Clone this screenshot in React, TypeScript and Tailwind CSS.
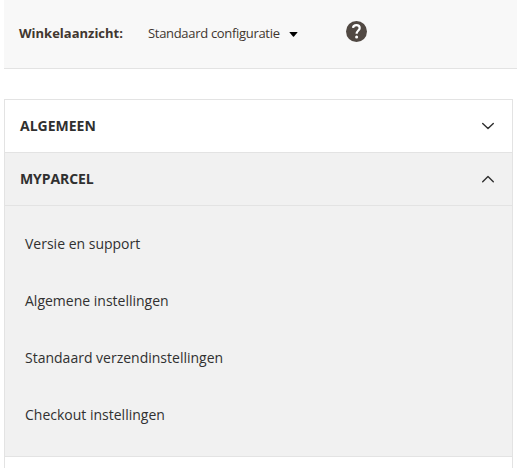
const items = ['Versie en support', 'Algemene instellingen', 'Standaard verzendinstellingen', 'Checkout instellingen'];

function Chevron({ up = false }: { up?: boolean }) {
  return (
    <svg width="14" height="8" viewBox="0 0 14 8" fill="none" stroke="#303030" strokeWidth="1.4" strokeLinecap="round" strokeLinejoin="round">
      <path d={up ? 'M1.7 6.8 L7 1.6 L12.3 6.8' : 'M1.7 1.4 L7 6.6 L12.3 1.4'} />
    </svg>
  );
}

export default function App() {
  return (
    <div className="h-[468px] w-[517px] overflow-hidden bg-white pl-1 font-['Open_Sans',sans-serif] text-[14px] text-[#303030]">
      <header className="flex h-[69px] items-start border-b border-[#e3e3e3] bg-[#f8f8f8] pl-[15px] text-[13px] text-[#41362f]">
        <span className="mt-[23px] w-[129px] leading-5 font-bold">Winkelaanzicht:</span>
        <span className="mt-[23px] w-[142px] leading-5 tracking-[-0.31px] whitespace-nowrap text-[#41362f]">Standaard configuratie</span>
        <svg className="mt-[32px] -ml-px" width="9" height="6" viewBox="0 0 9 6">
          <path d="M1 0h7q.8 0 .4.6L5 4.5q-.5.5-1 0L.6.6Q.2 0 1 0z" fill="#000" />
        </svg>
        <svg className="mt-[21px] ml-[48px]" width="21" height="21" viewBox="0 0 21 21">
          <circle cx="10.5" cy="10.5" r="10.5" fill="#514943" />
          <path d="M7 6.8C7.2 5 8.6 4.1 10.4 4.1c2 0 3.3 1.1 3.3 2.8 0 2.5-3.1 2.7-3.1 5.9" fill="none" stroke="#fff" strokeWidth="2.2" />
          <circle cx="10.6" cy="16.1" r="1.5" fill="#fff" />
        </svg>
      </header>
      <main className="mt-[30px] w-[509px] border border-[#e3e3e3]">
        <div className="flex h-[53px] items-center justify-between border-b border-[#e3e3e3] pr-[17px] pl-[15px] font-bold">
          <span className="pb-[2px]">ALGEMEEN</span><Chevron />
        </div>
        <div className="flex h-[53px] items-center justify-between border-b border-[#e3e3e3] bg-[#f1f1f1] pr-[17px] pl-[15px] font-bold">
          <span className="pb-[2px] tracking-[-0.1px]">MYPARCEL</span><Chevron up />
        </div>
        <ul className="h-[251px] border-b border-[#e3e3e3] bg-[#f1f1f1] pt-[9px] pl-5">
          {items.map((item) => <li key={item} className="flex h-[57px] items-center">{item}</li>)}
        </ul>
        <div className="h-[53px]" />
      </main>
    </div>
  );
}
